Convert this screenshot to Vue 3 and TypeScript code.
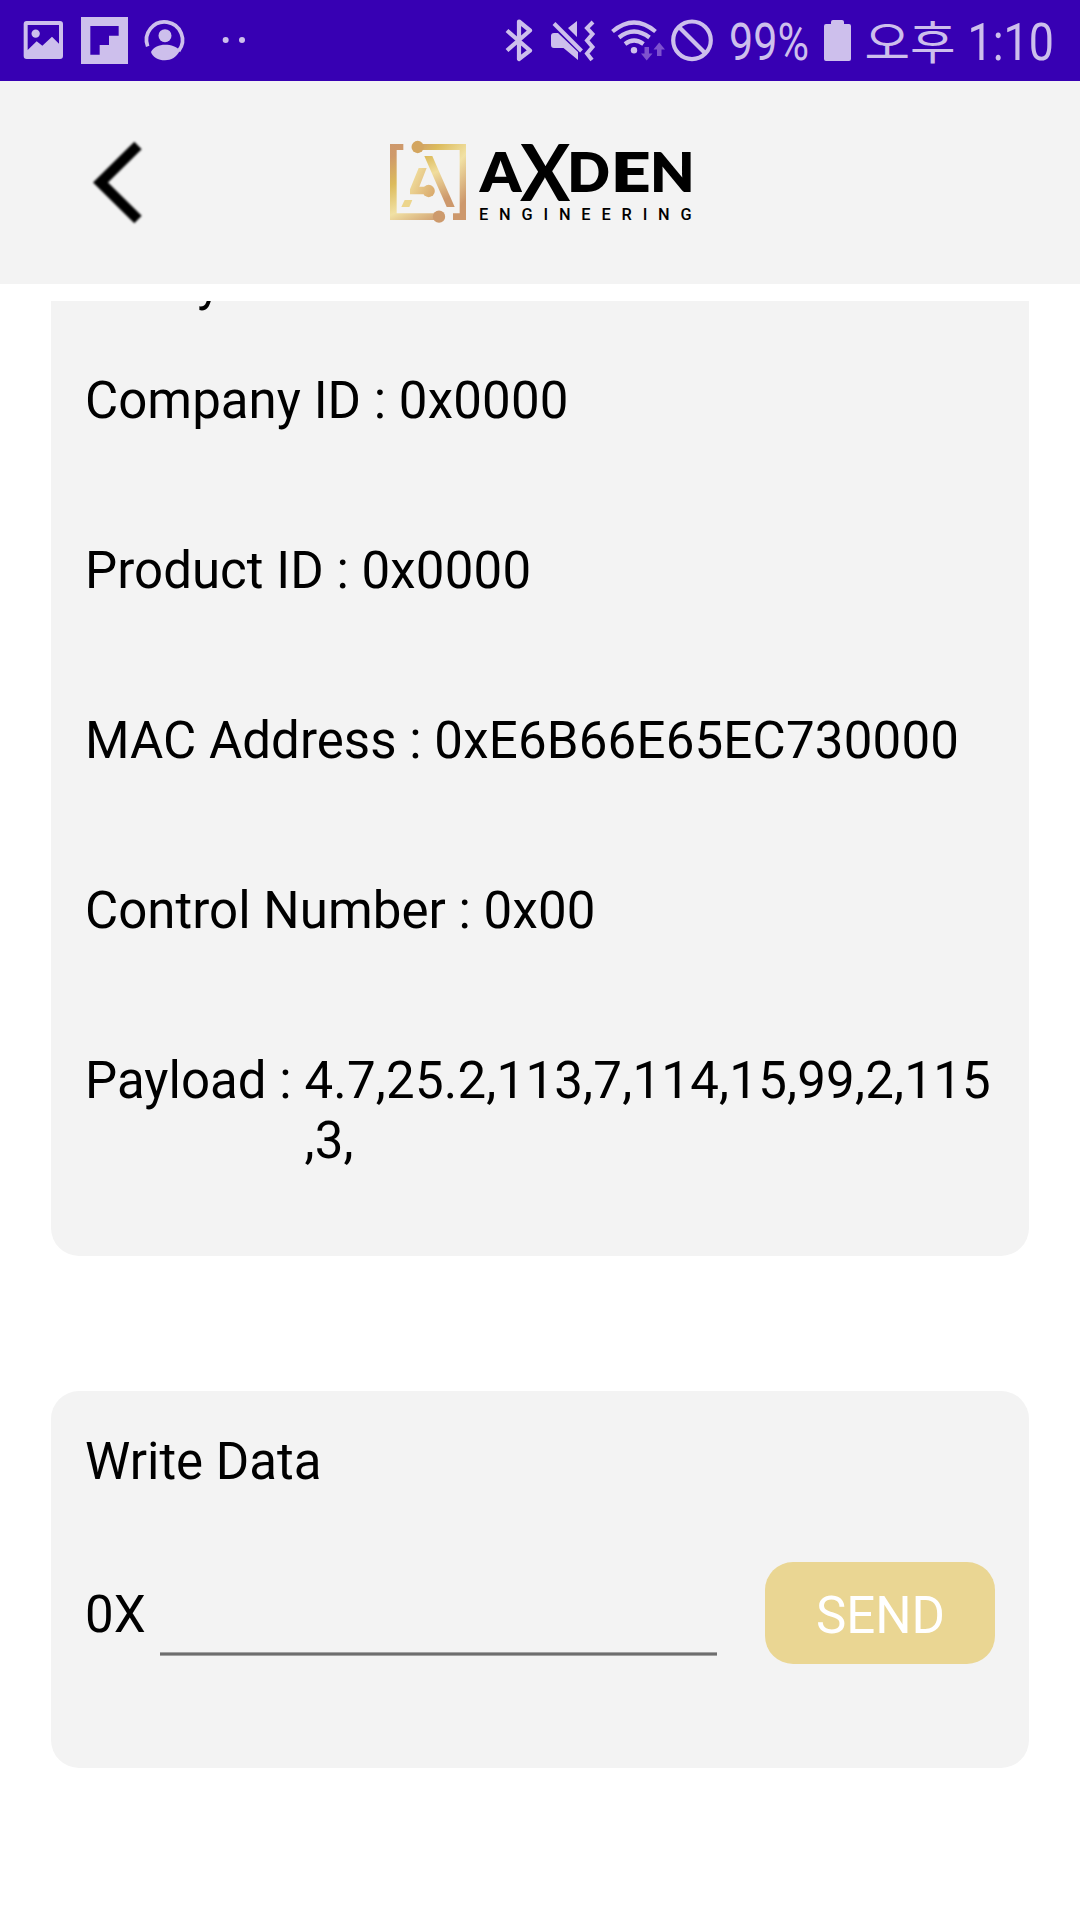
<script setup lang="ts">
import { ref } from 'vue'

interface Field {
  label: string
  value: string
}

const fields: Field[] = [
  { label: 'Company ID : ', value: '0x0000' },
  { label: 'Product ID : ', value: '0x0000' },
  { label: 'MAC Address : ', value: '0xE6B66E65EC730000' },
  { label: 'Control Number : ', value: '0x00' },
  { label: 'Payload : ', value: '4.7,25.2,113,7,114,15,99,2,115,3,' },
]

const hex = ref('')
</script>

<template>
  <div class="screen">
    <div class="status">
      <svg width="280" height="81" viewBox="0 0 840 243" fill="#cdbfec">
        <path fill-rule="evenodd" d="M80 63H180Q189 63 189 72V168Q189 177 180 177H80Q71 177 71 168V72Q71 63 80 63ZM83 75V150L110 124L127 137L156 110L177 131V75Z" />
        <circle cx="107" cy="101" r="12.5" />
        <path fill-rule="evenodd" d="M243 51H384V192H243ZM271 78V164H299V135H327V107H356V78Z" />
        <path d="M443 139A54 54 0 1 1 536 153" fill="none" stroke="#cdbfec" stroke-width="11" />
        <ellipse cx="495" cy="107" rx="19.500" ry="19.500" />
        <path d="M453 156C460 140 478 134 495 134C514 134 530 140 540 151C530 172 513 181 495 181C474 181 457 170 453 156Z" />
        <circle cx="677" cy="120" r="9" />
        <circle cx="726" cy="120" r="9" />
      </svg>
      <svg width="590" height="81" viewBox="490 0 590 81" fill="#cdbfec">
        <g fill="none" stroke="#cdbfec" stroke-width="4.200">
          <path d="M507 30.500L530 50.500L519 59V21.500L530 30.500L507 50.500" stroke-linejoin="round" />
          <path d="M593 22L587 28L592.500 34L587 40.500L592.500 47L587 53.500L592 60" stroke-width="4" />
          <path d="M612.500 31.500Q634 13.500 655.500 31.500M619 37.500Q634 25.500 649.500 37.500M625 44Q634 37 643.500 44" />
          <circle cx="692" cy="40.300" r="18.800" />
          <path d="M679 27L705.500 53.500" />
          <path d="M554 23.500L581.500 51" stroke-width="4" />
        </g>
        <path d="M554 33H558L578 52V60L563.500 48H554Q551 48 551 45V36Q551 33 554 33ZM568 28L577 21V37Z" />
        <circle cx="634" cy="50.300" r="3.200" />
        <path fill="#7e52ce" d="M644.500 47H649V53.500H652.500L646.700 60.500L641 53.500H644.500ZM657 56H661.500V49.500H665L659.200 42.500L653.500 49.500H657Z" />
        <text x="729" y="60" font-size="52" textLength="80" lengthAdjust="spacingAndGlyphs">99%</text>
        <path d="M826 24H831V22Q831 20 833 20H842Q844 20 844 22V24H849Q851 24 851 26V59Q851 61 849 61H826Q824 61 824 59V26Q824 24 826 24Z" />
        <text class="ko" x="864.500" y="59" font-size="46" textLength="91" lengthAdjust="spacingAndGlyphs">오후</text>
        <text x="967.500" y="60" font-size="52" textLength="86.500" lengthAdjust="spacingAndGlyphs">1:10</text>
      </svg>
    </div>

    <header class="header">
      <svg class="back" width="60" height="90" viewBox="0 0 60 90">
        <path d="M50 8.500L12.500 45.500L50 82.500" fill="none" stroke="#000" stroke-width="10.500" />
      </svg>
      <svg class="logo" width="320" height="100" viewBox="0 0 960 300">
        <defs>
          <linearGradient id="goldLeft" gradientUnits="userSpaceOnUse" x1="10" y1="50" x2="120" y2="300">
            <stop offset="0" stop-color="#cd986c" />
            <stop offset=".14" stop-color="#cf9a6a" />
            <stop offset=".42" stop-color="#dcbb5c" />
            <stop offset=".72" stop-color="#f1e1a4" />
            <stop offset="1" stop-color="#cd9a6c" />
          </linearGradient>
          <linearGradient id="goldRight" gradientUnits="userSpaceOnUse" x1="95" y1="50" x2="300" y2="220">
            <stop offset="0" stop-color="#cd986c" />
            <stop offset=".22" stop-color="#dcbb5c" />
            <stop offset=".52" stop-color="#f1e1a4" />
            <stop offset=".85" stop-color="#cd986c" />
          </linearGradient>
          <linearGradient id="goldLeg" gradientUnits="userSpaceOnUse" x1="140" y1="78" x2="205" y2="231">
            <stop offset="0" stop-color="#dcbb5c" />
            <stop offset=".33" stop-color="#f0dd9c" />
            <stop offset=".85" stop-color="#cd986c" />
          </linearGradient>
          <linearGradient id="goldFoot" gradientUnits="userSpaceOnUse" x1="90" y1="150" x2="165" y2="190">
            <stop offset="0" stop-color="#f0dd9c" />
            <stop offset="1" stop-color="#d9a96c" />
          </linearGradient>
        </defs>
        <g fill="url(#goldLeft)">
          <path d="M30 42H70V60H50V250H177V270H30Z" />
          <circle cx="177" cy="260" r="18.500" fill="#cd9a6c" />
        </g>
        <g fill="url(#goldRight)">
          <path d="M113 42H258V270H219V250H239V60H113Z" />
          <circle cx="113" cy="51" r="18.500" fill="#d3a55f" />
        </g>
        <path fill="url(#goldLeg)" d="M133 78H157L224 231H200Z" />
        <g fill="url(#goldFoot)">
          <path d="M116 114H140L118 170H145V193H90V178Z" />
          <circle cx="146" cy="183" r="18.500" />
          <path d="M74 210H97L88 231H64Z" fill="#ecd58c" />
        </g>
        <g class="brand" font-size="165">
          <text x="299" y="187" textLength="125" lengthAdjust="spacingAndGlyphs">A</text>
          <text class="tall" x="420" y="213" font-size="236" textLength="151" lengthAdjust="spacingAndGlyphs">X</text>
          <text x="562" y="187" textLength="128" lengthAdjust="spacingAndGlyphs">D</text>
          <text x="692" y="187" textLength="120" lengthAdjust="spacingAndGlyphs">E</text>
          <text x="810" y="187" textLength="134" lengthAdjust="spacingAndGlyphs">N</text>
        </g>
        <text class="tagline" x="297" y="270" font-size="49" textLength="638">ENGINEERING</text>
      </svg>
    </header>

    <main class="scroll">
      <section class="card notify">
        <h2 class="title">Notify Data</h2>
        <div v-for="f in fields" :key="f.label" class="row">
          <span class="label">{{ f.label }}</span>
          <span class="value">{{ f.value }}</span>
        </div>
      </section>

      <section class="card write">
        <h2 class="title">Write Data</h2>
        <div class="entry">
          <span class="prefix">0X</span>
          <input v-model="hex" class="field" type="text" />
          <button class="send" type="button">SEND</button>
        </div>
      </section>
    </main>
  </div>
</template>

<style>
body {
  margin: 0;
}
</style>

<style scoped>
.screen {
  width: 1080px;
  height: 1920px;
  overflow: hidden;
  display: flex;
  flex-direction: column;
  background: #fff;
  color: #000;
  font-family: Roboto, "Noto Sans CJK KR", sans-serif;
  font-size: 51px;
  line-height: 60px;
}
.status {
  flex: none;
  height: 81px;
  display: flex;
  justify-content: space-between;
  background: #3700b3;
}
.status svg {
  flex: none;
}
.ko {
  font-family: "Noto Sans CJK KR", sans-serif;
}
.header {
  flex: none;
  box-sizing: border-box;
  height: 203px;
  display: flex;
  align-items: flex-start;
  padding: 49px 0 0 88px;
  background: #f3f3f3;
}
.back {
  margin-top: 7px;
  filter: blur(0.8px);
}
.logo {
  margin-left: 232px;
  overflow: visible;
}
.brand {
  font-family: Lato, sans-serif;
  font-weight: 800;
}
.tall {
  font-weight: 700;
}
.tagline {
  font-family: Roboto, sans-serif;
  font-weight: 500;
}
.scroll {
  flex: 1;
  margin: 17px 51px 0;
  overflow: hidden;
}
.card {
  box-sizing: border-box;
  padding: 41px 34px 0;
  border-radius: 28px;
  background: #f3f3f3;
}
.notify {
  height: 1045px;
  margin-top: -90px;
}
.title {
  margin: 0;
  font-size: inherit;
  font-weight: 400;
}
.row {
  display: flex;
  height: 60px;
  margin-bottom: 110px;
}
.notify .title {
  margin-bottom: 59px;
}
.label {
  flex: none;
  white-space: pre;
  letter-spacing: 0.04px;
}
.value {
  letter-spacing: 0.2px;
  word-break: break-all;
  line-break: anywhere;
}
.write {
  height: 377px;
  margin-top: 135px;
}
.entry {
  display: flex;
  align-items: center;
  height: 102px;
  margin-top: 70px;
}
.prefix {
  width: 75px;
  padding-top: 3px;
}
.field {
  box-sizing: border-box;
  width: 557px;
  height: 93px;
  margin: 0 48px 0 0;
  padding: 0;
  align-self: flex-start;
  border: 0;
  border-bottom: 2px solid #6e6e6e;
  box-shadow: 0 1px #a2a2a2, inset 0 -1px #a2a2a2;
  background: none;
  font: inherit;
  outline: none;
}
.send {
  width: 230px;
  height: 102px;
  padding: 5px 0 0 1px;
  border: 0;
  border-radius: 28px;
  background: #ead693;
  color: #fff;
  font: inherit;
}
</style>
